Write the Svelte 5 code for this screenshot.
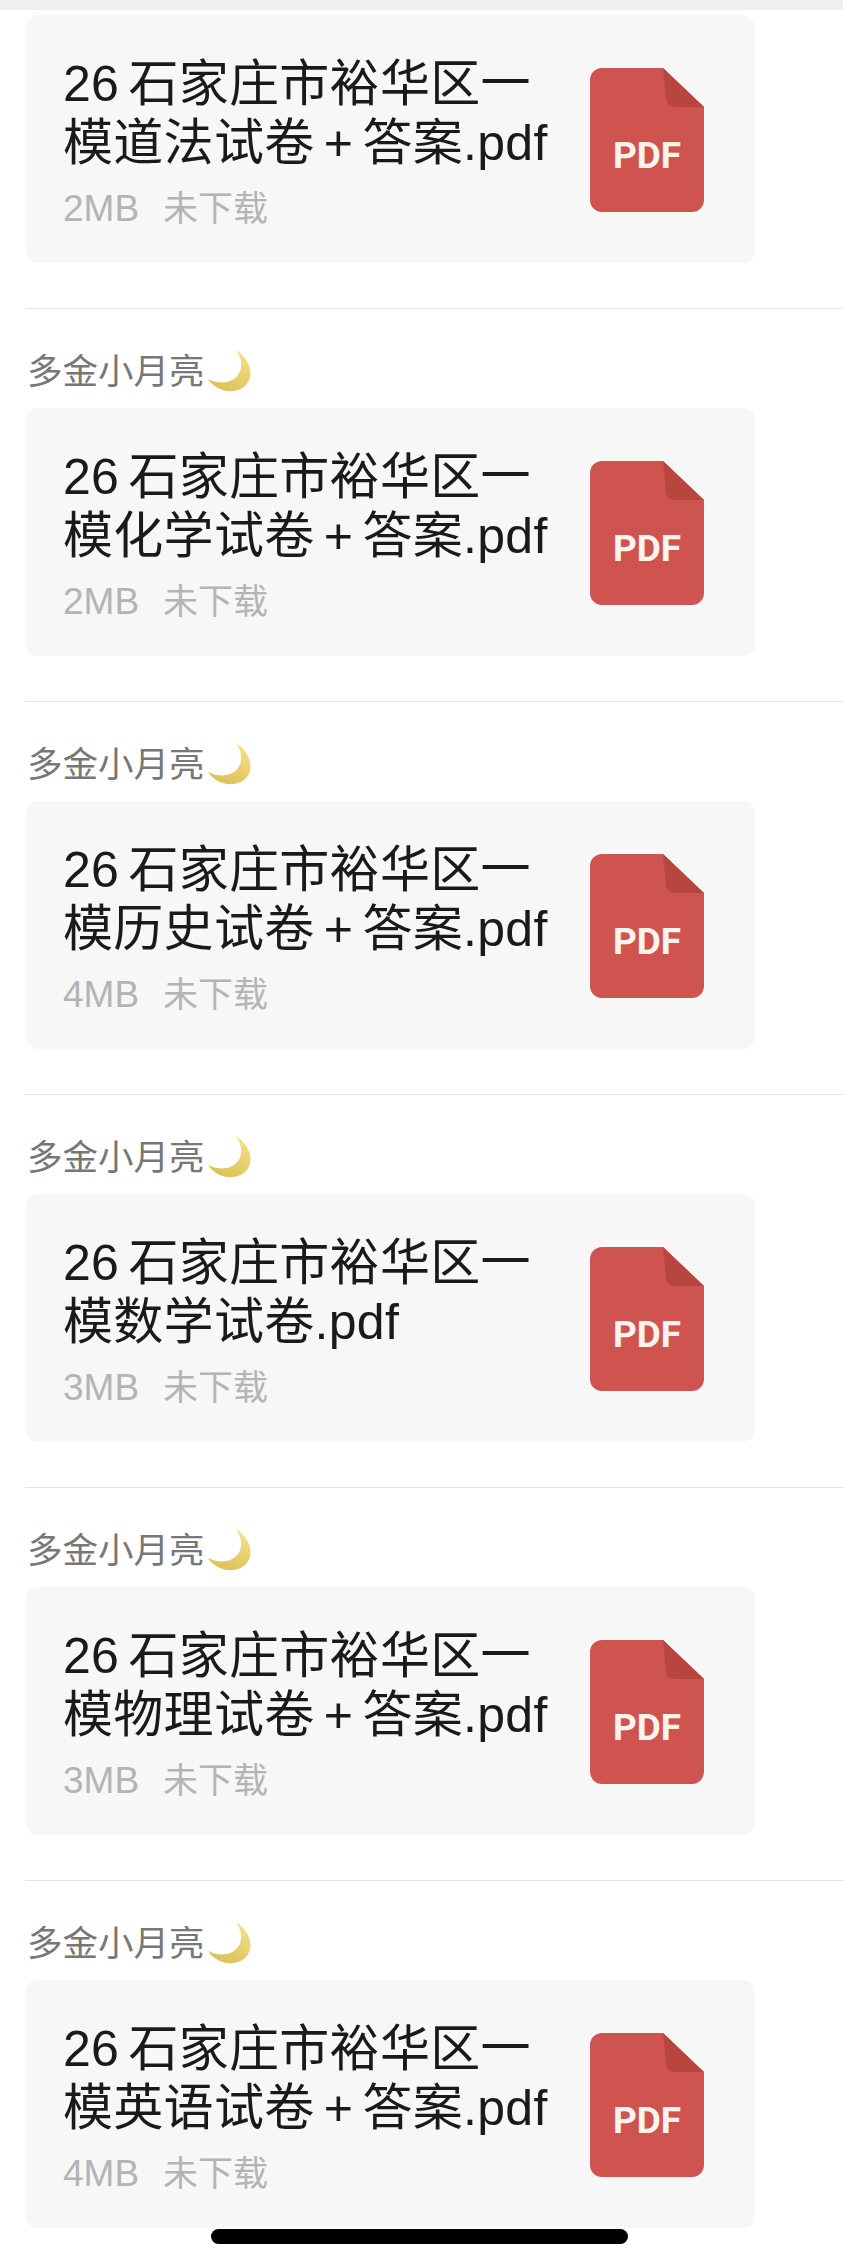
<script>
  const files = [
    { id: 'daofa', subject: '道法试卷 + 答案', size: '2MB', first: true },
    { id: 'huaxue', subject: '化学试卷 + 答案', size: '2MB' },
    { id: 'lishi', subject: '历史试卷 + 答案', size: '4MB' },
    { id: 'shuxue', subject: '数学试卷', size: '3MB' },
    { id: 'wuli', subject: '物理试卷 + 答案', size: '3MB' },
    { id: 'yingyu', subject: '英语试卷 + 答案', size: '4MB' }
  ];
</script>

<div class="page">
  <div class="topbar"></div>
  {#each files as file (file.id)}
    <section class="msg" class:first={file.first}>
      {#if !file.first}
        <div class="sender">
          <span class="name">多金小月亮</span>
          <svg class="moon" viewBox="0 0 44 44" width="44" height="44">
            <defs>
              <linearGradient id="moon-{file.id}" x1="0.8" y1="0" x2="0.3" y2="1">
                <stop offset="0" stop-color="#f3e28c" />
                <stop offset="1" stop-color="#dcc055" />
              </linearGradient>
            </defs>
            <path fill="url(#moon-{file.id})" d="M28 1C42 10 47 26 38 36 30 45 10 45 0 30 12 36 24 34 30 26 35 19 34 10 28 1Z" />
          </svg>
        </div>
      {/if}
      <div class="card">
        <div class="info">
          <div class="title">26 石家庄市裕华区一模{file.subject}.pdf</div>
          <div class="meta">
            <span class="size">{file.size}</span>
            <span>未下载</span>
          </div>
        </div>
        <svg class="pdf" viewBox="0 0 114 144" width="114" height="144">
          <path fill="#cf5450" d="M12 0H73L114 39V132A12 12 0 0 1 102 144H12A12 12 0 0 1 0 132V12A12 12 0 0 1 12 0Z" />
          <path fill="#b8463f" d="M73 0L114 39H84A8 8 0 0 1 76 31Z" />
          <text x="57" y="100" text-anchor="middle" class="pdf-label">PDF</text>
        </svg>
      </div>
    </section>
  {/each}
  <div class="home-bar"></div>
</div>

<style>
  :global(body) {
    margin: 0;
    background: #fff;
  }

  .page {
    position: relative;
    width: 843px;
    height: 2268px;
    overflow: hidden;
    background: #fff;
    font-family: "Liberation Sans", "Noto Sans CJK SC", sans-serif;
  }

  .topbar {
    height: 10px;
    background: #efefef;
  }

  .msg {
    margin-left: 25px;
    padding-bottom: 45px;
    border-top: 1px solid #e4e4e4;
  }

  .msg.first {
    border-top: 0;
    padding-top: 5px;
  }

  .sender {
    display: flex;
    align-items: center;
    height: 46px;
    padding: 39px 0 14px 2px;
    font-size: 35.5px;
    color: #777;
  }

  .name {
    margin-bottom: 5px;
  }

  .moon {
    flex: none;
    margin-left: 3px;
  }

  .card {
    display: flex;
    justify-content: space-between;
    align-items: center;
    box-sizing: border-box;
    width: 729px;
    height: 248px;
    margin-left: 1px;
    padding: 0 51px 0 37px;
    border-radius: 12px;
    background: #f7f7f7;
  }

  .info {
    width: 515px;
    align-self: flex-start;
    padding-top: 40px;
  }

  .title {
    font-size: 50px;
    line-height: 59px;
    letter-spacing: 0.3px;
    word-spacing: -5px;
    color: #1a1a1a;
  }

  .meta {
    display: flex;
    align-items: baseline;
    gap: 24px;
    margin-top: 13px;
    font-size: 35px;
    line-height: 46px;
    color: #b4b4b4;
  }

  .size {
    font-size: 37px;
  }

  .pdf {
    flex: none;
    margin-top: 2px;
  }

  .pdf-label {
    font-family: Roboto, sans-serif;
    font-size: 37px;
    font-weight: 700;
    fill: #fdf3ee;
  }

  .home-bar {
    position: absolute;
    left: 211px;
    top: 2229px;
    width: 417px;
    height: 15px;
    border-radius: 8px;
    background: #000;
  }
</style>
